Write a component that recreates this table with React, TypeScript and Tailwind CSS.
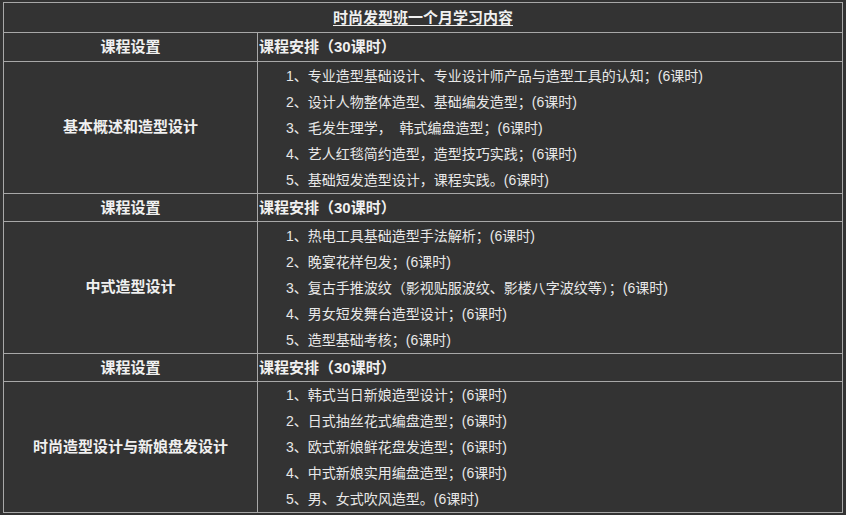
const sections = [
  {
    name: '基本概述和造型设计',
    items: [
      '1、专业造型基础设计、专业设计师产品与造型工具的认知；(6课时)',
      '2、设计人物整体造型、基础编发造型；(6课时)',
      '3、毛发生理学，  韩式编盘造型；(6课时)',
      '4、艺人红毯简约造型，造型技巧实践；(6课时)',
      '5、基础短发造型设计，课程实践。(6课时)',
    ],
  },
  {
    name: '中式造型设计',
    items: [
      '1、热电工具基础造型手法解析；(6课时)',
      '2、晚宴花样包发；(6课时)',
      '3、复古手推波纹（影视贴服波纹、影楼八字波纹等）；(6课时)',
      '4、男女短发舞台造型设计；(6课时)',
      '5、造型基础考核；(6课时)',
    ],
  },
  {
    name: '时尚造型设计与新娘盘发设计',
    items: [
      '1、韩式当日新娘造型设计；(6课时)',
      '2、日式抽丝花式编盘造型；(6课时)',
      '3、欧式新娘鲜花盘发造型；(6课时)',
      '4、中式新娘实用编盘造型；(6课时)',
      '5、男、女式吹风造型。(6课时)',
    ],
  },
];

export default function App() {
  return (
    <div
      className="w-[846px] h-[515px] bg-[#333333] pt-[2px] pl-[3px] overflow-hidden text-[14px] text-[#f0f0f0]"
      style={{ fontFamily: '"Liberation Sans", "Noto Sans CJK SC", sans-serif' }}
    >
      <table className="w-[840px] table-fixed border-collapse border border-[#a8a8a8]">
        <colgroup>
          <col className="w-[254px]" />
          <col />
        </colgroup>
        <tbody>
          <tr className="h-[30px]">
            <td colSpan={2} className="border border-[#a8a8a8] text-center font-bold text-[15px] leading-[20px] p-0">
              <span className="underline underline-offset-2">时尚发型班一个月学习内容</span>
            </td>
          </tr>
          {sections.map((s, i) => (
            <Section key={s.name} name={s.name} items={s.items} first={i === 0} last={i === sections.length - 1} />
          ))}
        </tbody>
      </table>
    </div>
  );
}

function Section({
  name,
  items,
  first,
  last,
}: {
  name: string;
  items: string[];
  first: boolean;
  last: boolean;
}) {
  return (
    <>
      <tr className={first ? 'h-[29px]' : 'h-[28px]'}>
        <td className="border border-[#a8a8a8] text-center font-bold text-[15px] leading-[20px] p-0">课程设置</td>
        <td className="border border-[#a8a8a8] font-bold text-[15px] leading-[20px] p-0 pl-[1px]">课程安排（30课时）</td>
      </tr>
      <tr>
        <td className="border border-[#a8a8a8] text-center font-bold text-[15px] p-0">{name}</td>
        <td className={`border border-[#a8a8a8] p-0 pl-[28px] text-[#e8e8e8] ${last ? 'pt-0' : 'pt-[1px]'}`}>
          {items.map((t) => (
            <div key={t} className="leading-[26px] whitespace-pre">
              {t}
            </div>
          ))}
        </td>
      </tr>
    </>
  );
}
